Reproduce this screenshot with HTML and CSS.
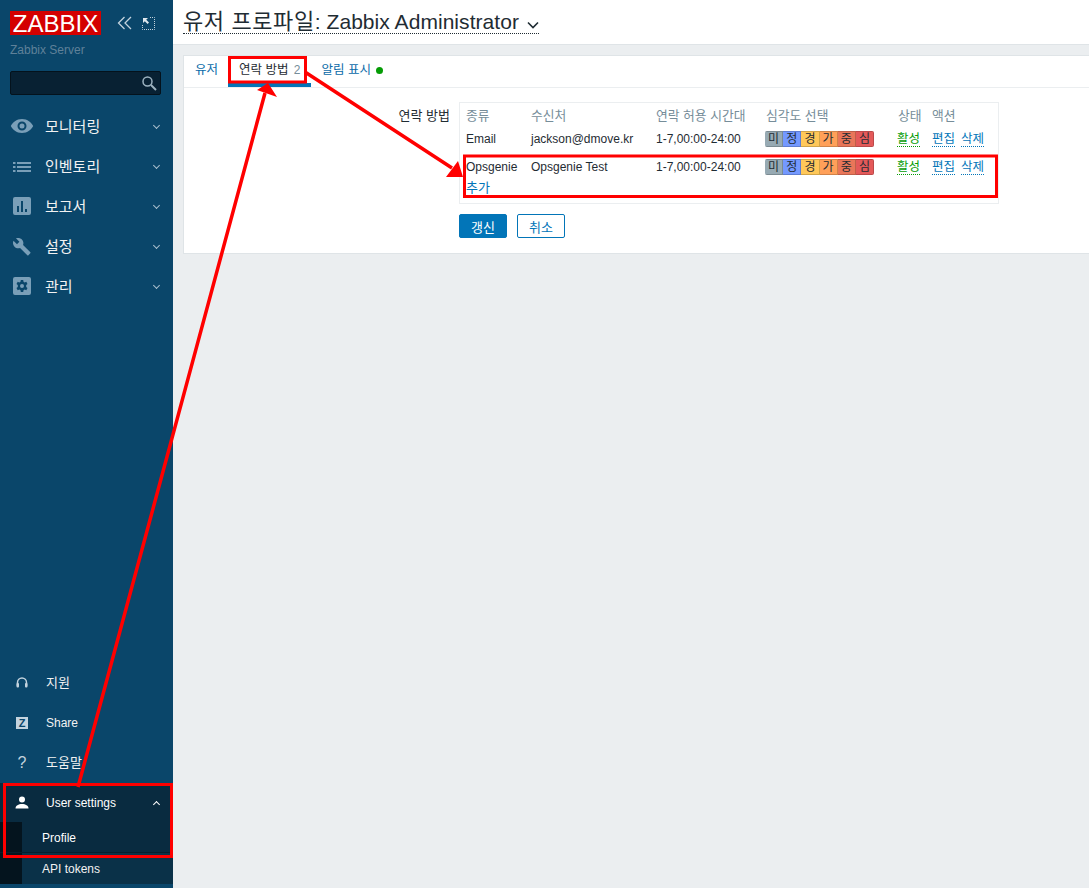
FILE: index.html
```html
<!DOCTYPE html>
<html lang="ko">
<head>
    <meta charset="UTF-8">
    <title>유저 프로파일</title>
    <link rel="stylesheet" href="styles.css">
</head>
<body>
<div class="layout">
    <aside class="sidebar">
        <div class="logo-row">
            <span class="logo">ZABBIX</span>
            <svg class="top-icon" viewBox="0 0 16 14" width="16" height="14"><path d="M7.500 1 1.500 7l6 6M14 1 8 7l6 6" fill="none" stroke="#c3d3de" stroke-width="1.300"/></svg>
            <svg class="top-icon kiosk" viewBox="0 0 13 13" width="13" height="13"><path d="M1 1h5L4.200 2.800 7 5.600 5.600 7 2.800 4.200 1 6z" fill="#dfe8ee"/><path d="M8 .5h4.500V12.500H.5V8" fill="none" stroke="#c3d3de" stroke-dasharray="1 1"/></svg>
        </div>
        <div class="server">Zabbix Server</div>
        <div class="search">
            <svg viewBox="0 0 16 16" width="16" height="16"><circle cx="6.500" cy="6.500" r="4.500" fill="none" stroke="#9db3c1" stroke-width="1.500"/><path d="m10 10 5 5" stroke="#9db3c1" stroke-width="2"/></svg>
        </div>
        <nav class="menu">
            <a class="menu-item">
                <svg class="icon" viewBox="0 0 24 24" width="24" height="24"><path d="M12 5C6.500 5 2.500 8.500 0.800 12c1.700 3.500 5.700 7 11.200 7s9.500-3.500 11.200-7C21.500 8.500 17.500 5 12 5zm0 11.500a4.500 4.500 0 1 1 0-9 4.500 4.500 0 0 1 0 9zm0-7a2.500 2.500 0 1 0 0 5 2.500 2.500 0 0 0 0-5z" fill="#7a9fb8"/></svg>
                <span>모니터링</span><i class="chev"></i>
            </a>
            <a class="menu-item">
                <svg class="icon" viewBox="0 0 24 24" width="24" height="24"><path d="M3 8h2.500v2H3zM7 8h14v2H7zM3 12h2.500v2H3zM7 12h14v2H7zM3 16h2.500v2H3zM7 16h14v2H7z" fill="#7a9fb8"/></svg>
                <span>인벤토리</span><i class="chev"></i>
            </a>
            <a class="menu-item">
                <svg class="icon" viewBox="0 0 24 24" width="24" height="24"><path d="M5 3h14a2 2 0 0 1 2 2v14a2 2 0 0 1-2 2H5a2 2 0 0 1-2-2V5a2 2 0 0 1 2-2zm2 9v6h2v-6zm4-5v11h2V7zm4 8v3h2v-3z" fill="#7a9fb8" fill-rule="evenodd"/></svg>
                <span>보고서</span><i class="chev"></i>
            </a>
            <a class="menu-item">
                <svg class="icon" viewBox="0 0 24 24" width="24" height="24"><path d="M21.700 19 12.600 9.900c.9-2.300.4-5-1.500-6.900-2-2-5-2.400-7.400-1.300L8 6 5 9 .6 4.700C-.6 7.100-.1 10.100 1.900 12.100c1.900 1.900 4.600 2.400 6.900 1.500l9.100 9.100c.4.400 1 .4 1.400 0l2.300-2.300c.5-.4.5-1.100.1-1.400z" fill="#7a9fb8" transform="translate(3 3) scale(.8)"/></svg>
                <span>설정</span><i class="chev"></i>
            </a>
            <a class="menu-item">
                <svg class="icon" viewBox="0 0 24 24" width="24" height="24"><path d="M5 3h14a2 2 0 0 1 2 2v14a2 2 0 0 1-2 2H5a2 2 0 0 1-2-2V5a2 2 0 0 1 2-2zm5.800 3-.3 1.700-1.200.7-1.600-.6L6.500 10l1.300 1.100v1.800L6.500 14l1.200 2.200 1.600-.6 1.200.7.3 1.700h2.400l.3-1.700 1.200-.7 1.600.6 1.200-2.200-1.300-1.100v-1.800L17.500 10l-1.200-2.200-1.600.6-1.200-.7L13.200 6zM12 10a2 2 0 1 1 0 4 2 2 0 0 1 0-4z" fill="#7a9fb8" fill-rule="evenodd"/></svg>
                <span>관리</span><i class="chev"></i>
            </a>
        </nav>
        <div class="bottom">
            <a class="bottom-item">
                <svg class="small-icon" viewBox="0 0 16 16" width="16" height="16"><path d="M3.500 11V7.500a4.500 4.500 0 0 1 9 0V11" fill="none" stroke="#c3d3de" stroke-width="1.500"/><rect x="2.500" y="8" width="2.500" height="4.500" rx="1" fill="#c3d3de"/><rect x="11" y="8" width="2.500" height="4.500" rx="1" fill="#c3d3de"/></svg>
                <span class="ko">지원</span>
            </a>
            <a class="bottom-item">
                <span class="z-icon">Z</span>
                <span>Share</span>
            </a>
            <a class="bottom-item">
                <span class="q-icon">?</span>
                <span class="ko">도움말</span>
            </a>
            <a class="bottom-item user">
                <svg class="small-icon" viewBox="0 0 16 16" width="16" height="16"><circle cx="8" cy="4.500" r="3" fill="#fff"/><path d="M1.500 13.500c0-3 3-4.500 6.500-4.500s6.500 1.500 6.500 4.500z" fill="#fff"/></svg>
                <span>User settings</span><i class="chev up"></i>
            </a>
            <div class="submenu">
                <a class="sub-item current">Profile</a>
                <a class="sub-item">API tokens</a>
            </div>
        </div>
    </aside>

    <main class="main">
        <header class="page-head">
            <h1 class="title"><span class="title-ko">유저 프로파일</span>: Zabbix Administrator <svg viewBox="0 0 12 8" width="12" height="8"><path d="m1 1.500 5 5 5-5" fill="none" stroke="#1f2c33" stroke-width="1.600"/></svg></h1>
        </header>
        <section class="card">
            <div class="tabs">
                <a class="tab"><span class="tab-ko">유저</span></a>
                <a class="tab active"><span class="tab-ko">연락 방법</span> <span class="count">2</span></a>
                <a class="tab"><span class="tab-ko">알림 표시</span> <i class="dot"></i></a>
            </div>
            <div class="form-row">
                <div class="form-label ko">연락 방법</div>
                <div class="form-field">
                    <div class="media-box">
                        <table class="media">
                            <thead>
                                <tr><th class="c-type">종류</th><th class="c-to">수신처</th><th class="c-when">연락 허용 시간대</th><th class="c-sev">심각도 선택</th><th class="c-status">상태</th><th>액션</th></tr>
                            </thead>
                            <tbody>
                                <tr>
                                    <td>Email</td><td>jackson@dmove.kr</td><td>1-7,00:00-24:00</td>
                                    <td><div class="sev"><span class="s1">미</span><span class="s2">정</span><span class="s3">경</span><span class="s4">가</span><span class="s5">중</span><span class="s6">심</span></div></td>
                                    <td><a class="dotted green">활성</a></td>
                                    <td class="actions"><a class="dotted">편집</a><a class="dotted">삭제</a></td>
                                </tr>
                                <tr>
                                    <td>Opsgenie</td><td>Opsgenie Test</td><td>1-7,00:00-24:00</td>
                                    <td><div class="sev"><span class="s1">미</span><span class="s2">정</span><span class="s3">경</span><span class="s4">가</span><span class="s5">중</span><span class="s6">심</span></div></td>
                                    <td><a class="dotted green">활성</a></td>
                                    <td class="actions"><a class="dotted">편집</a><a class="dotted">삭제</a></td>
                                </tr>
                            </tbody>
                        </table>
                        <a class="add ko">추가</a>
                    </div>
                    <div class="buttons">
                        <button class="btn primary">갱신</button>
                        <button class="btn">취소</button>
                    </div>
                </div>
            </div>
        </section>
    </main>
</div>

<!-- 스크린샷 위에 그려진 빨간 표시 -->
<svg class="marks" viewBox="0 0 1089 888" width="1089" height="888">
    <g fill="none" stroke="#f00" stroke-width="3">
        <rect x="229.500" y="57.500" width="76" height="24.500"/>
        <rect x="464.500" y="156" width="532" height="40.500"/>
        <rect x="4.500" y="784.500" width="167" height="72"/>
    </g>
    <path d="M78 787 265 93M305 72 452 168" fill="none" stroke="#f00" stroke-width="3.500"/>
    <path d="m268 83 9 14-20-7zM463 177l-17 0 12-16z" fill="#f00"/>
</svg>
</body>
</html>
```

FILE: styles.css
```css
html, body {
    margin: 0;
    padding: 0;
    height: 100%;
}
body {
    font-family: "Liberation Sans", Arial, "Noto Sans CJK KR", sans-serif;
    font-size: 12px;
    color: #1f2c33;
    background-color: #ebeef0;
    overflow: hidden;
}
.ko {
    font-size: 13px;
}
.layout {
    display: flex;
    width: 1089px;
    height: 888px;
}
.sidebar {
    width: 173px;
    flex: none;
    display: flex;
    flex-direction: column;
    background-color: #0a466a;
    color: #f2f2f2;
}
.logo-row {
    display: flex;
    align-items: center;
    padding: 11px 0 0 10px;
    height: 24px;
}
.logo {
    width: 91px;
    height: 24px;
    line-height: 25px;
    text-align: center;
    background-color: #d40000;
    color: #fff;
    font-size: 24px;
}
.top-icon {
    margin-left: 16px;
}
.kiosk {
    margin-left: 9px;
}
.server {
    margin: 8px 0 0 10px;
    height: 14px;
    line-height: 14px;
    color: #5f8199;
}
.search {
    display: flex;
    align-items: center;
    justify-content: flex-end;
    box-sizing: border-box;
    height: 24px;
    margin: 14px 12px 0 10px;
    padding-right: 3px;
    background-color: #082133;
    border: 1px solid #04121c;
    border-radius: 2px;
}
.menu {
    margin-top: 11px;
}
.menu-item {
    display: flex;
    align-items: center;
    height: 40px;
    padding-left: 10px;
    font-size: 15px;
    color: #f2f2f2;
}
.menu-item span {
    margin-top: -2px;
}
.icon {
    margin-right: 11px;
}
.chev {
    width: 4px;
    height: 4px;
    margin: -2px 14px 0 auto;
    border-right: 1px solid #a9bfcd;
    border-bottom: 1px solid #a9bfcd;
    transform: rotate(45deg);
}
.chev.up {
    margin-top: 3px;
    border-color: #fff;
    transform: rotate(225deg);
}
.bottom {
    margin-top: auto;
    padding-bottom: 4px;
}
.bottom-item {
    display: flex;
    align-items: center;
    height: 40px;
    padding-left: 14px;
    color: #f2f2f2;
}
.bottom-item .ko {
    margin-top: -3px;
}
.small-icon {
    width: 16px;
    margin-right: 16px;
}
.z-icon {
    width: 12px;
    height: 12px;
    margin: 0 18px 0 2px;
    line-height: 12px;
    text-align: center;
    font-size: 11px;
    font-weight: bold;
    color: #0a466a;
    background-color: #c3d3de;
}
.q-icon {
    width: 16px;
    margin-right: 16px;
    text-align: center;
    font-size: 16px;
    color: #c3d3de;
}
.bottom-item.user {
    background-color: #092b40;
    color: #fff;
    height: 39px;
}
.submenu {
    background: linear-gradient(to right, #04141e 22px, #0a3148 22px);
}
.sub-item {
    display: block;
    height: 31px;
    line-height: 33px;
    padding-left: 42px;
    color: #f2f2f2;
}
.sub-item.current {
    height: 30px;
    background: linear-gradient(to right, #04141e 22px, #092b40 22px);
    border-bottom: 1px solid #061f2e;
    color: #fff;
}
.main {
    flex: 1;
    min-width: 0;
}
.page-head {
    box-sizing: border-box;
    height: 45px;
    padding: 8px 0 0 10px;
    background-color: #fff;
    border-bottom: 1px solid #dfe4e7;
}
.title {
    display: inline-block;
    margin: 0;
    height: 25px;
    line-height: 28px;
    font-size: 21px;
    font-weight: normal;
    letter-spacing: 0.05px;
    border-bottom: 1px dotted #1f2c33;
}
.title-ko {
    font-size: 22px;
    letter-spacing: 0.6px;
}
.title svg {
    margin-left: 2px;
}
.card {
    margin: 10px 0 0 10px;
    height: 199px;
    box-sizing: border-box;
    background-color: #fff;
    border: 1px solid #dfe4e7;
    border-right: 0;
}
.tabs {
    display: flex;
    height: 31px;
    border-bottom: 1px solid #ebeef0;
}
.tab {
    height: 27px;
    line-height: 28px;
    padding: 0 10px 0 11px;
    color: #0a6aa8;
    white-space: nowrap;
}
.tab-ko {
    font-size: 12.500px;
}
.tab.active {
    color: #1f2c33;
    border-bottom: 4px solid #0275b8;
}
.count {
    margin-left: 2px;
    color: #768d99;
}
.dot {
    display: inline-block;
    width: 7px;
    height: 7px;
    margin-left: 2px;
    border-radius: 50%;
    background-color: #059c05;
}
.form-row {
    display: flex;
    padding-top: 14px;
}
.form-label {
    width: 266px;
    padding-top: 3px;
    text-align: right;
    flex: none;
}
.form-field {
    margin-left: 9px;
}
.media-box {
    box-sizing: border-box;
    width: 540px;
    height: 102px;
    padding: 1px 6px;
    border: 1px solid #ebeef0;
}
.media {
    border-collapse: collapse;
    table-layout: fixed;
    width: 527px;
}
.media th {
    height: 21px;
    padding: 0;
    font-size: 12.800px;
    font-weight: normal;
    text-align: left;
    color: #768d99;
}
.media td {
    height: 28px;
    padding: 0;
    vertical-align: middle;
}
.c-type { width: 65px; }
.c-to { width: 125px; }
.c-when { width: 110px; }
.c-sev { width: 132px; }
.c-status { width: 34px; }
.sev {
    display: flex;
    width: 109px;
    height: 16px;
    margin-left: -1px;
    border-radius: 2px;
    overflow: hidden;
}
.sev span {
    flex: 1;
    line-height: 15px;
    text-align: center;
    box-sizing: border-box;
    border: 1px solid rgba(0, 0, 0, 0.18);
    border-left: 0;
}
.s1 { background-color: #97aab3; }
.s2 { background-color: #7499ff; }
.s3 { background-color: #ffc859; }
.s4 { background-color: #ffa059; }
.s5 { background-color: #e97659; }
.s6 { background-color: #e45959; }
.dotted {
    display: inline-block;
    height: 14px;
    line-height: 14px;
    font-size: 12.500px;
    color: #0275b8;
    border-bottom: 1px dotted #0275b8;
}
.dotted.green {
    margin-left: -1px;
    color: #059c05;
    border-bottom-color: #059c05;
}
.actions {
    display: flex;
    gap: 6px;
    height: 28px;
    align-items: center;
}
.add {
    display: block;
    margin-top: -4px;
    color: #0275b8;
}
.buttons {
    display: flex;
    gap: 10px;
    margin-top: 10px;
}
.btn {
    box-sizing: border-box;
    width: 48px;
    height: 24px;
    padding: 0;
    font: inherit;
    font-size: 13px;
    color: #0275b8;
    background-color: #fff;
    border: 1px solid #0275b8;
    border-radius: 2px;
}
.btn.primary {
    color: #fff;
    background-color: #0275b8;
}
.marks {
    position: absolute;
    left: 0;
    top: 0;
    pointer-events: none;
}
```
